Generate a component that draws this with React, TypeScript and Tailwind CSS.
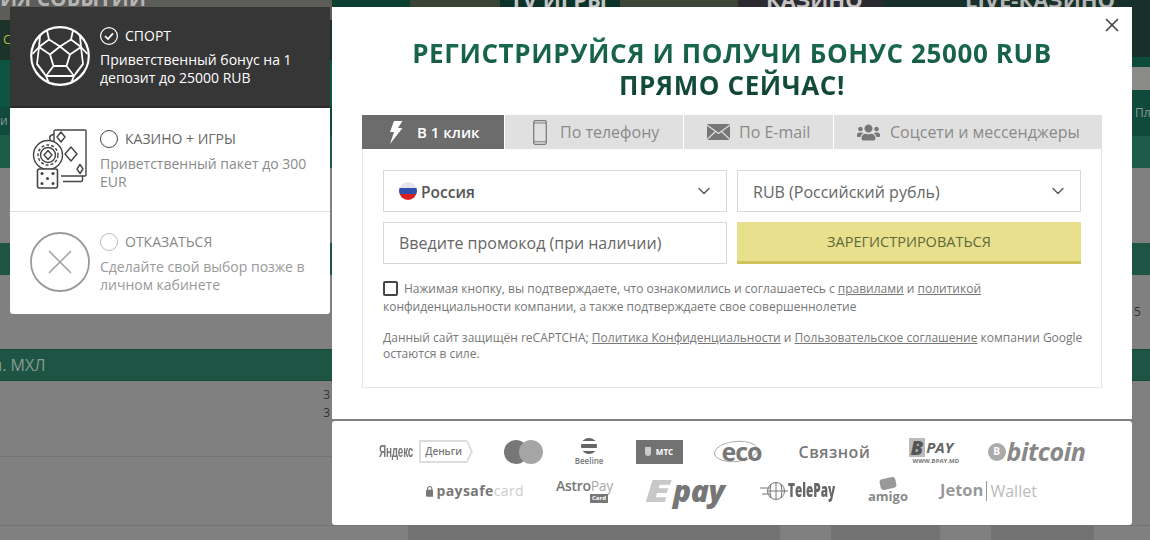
import { ChevronDown, X } from 'lucide-react';
import { FaUsers } from 'react-icons/fa';

const font = "font-['Open_Sans',sans-serif]";

function SoccerIcon() {
  return (
    <svg width="60" height="60" viewBox="0 0 60 60" fill="none" stroke="#fff" strokeWidth="1.8" strokeLinejoin="round" className="shrink-0">
      <circle cx="30" cy="30" r="28.8" strokeWidth="2.2" />
      <path d="M30 20.5L40 28.5L36.5 40H23.5L20 28.5Z" />
      <path d="M30 20.5L19 13.5L17 4.5M30 20.5L41 13.5L43 4.5M19 13.5L9 21L10 10M41 13.5L51 21L50 10" />
      <path d="M20 28.5L9 21L2.5 28M40 28.5L51 21L57.5 28M9 21L7 38L14 47M51 21L53 38L46 47" />
      <path d="M23.5 40L16 50L7 38M36.5 40L44 50L53 38M16 50L19 57M44 50L41 57M16 50H44" />
    </svg>
  );
}

function CasinoIcon() {
  return (
    <svg width="60" height="60" viewBox="0 0 60 60" fill="none" stroke="#444" strokeWidth="1.4" strokeLinejoin="round" className="shrink-0">
      <g transform="translate(3 0)">
        <path d="M21 13V2.5Q21 1 22.5 1H52Q53 1 53 2V46Q53 47 52 47H28" />
        <path d="M21 5L18 6.5Q16 7.5 17 10L18 14" />
        <path d="M30 52.5H48Q49.5 52.5 49.5 51V47" />
        <circle cx="15" cy="26" r="14.5" fill="#fff" />
        <circle cx="15" cy="26" r="10" strokeDasharray="3 2" />
        <circle cx="15" cy="26" r="7.5" />
        <path d="M15 21.5L19 26L15 30.5L11 26Z" />
        <path d="M38 18L44 25L38 32L32 25Z" />
        <path d="M28 3L32 8L28 13L24 8Z" />
        <path d="M47 35.5L50 40L47 44.5L44 40Z" />
        <rect x="4.5" y="40" width="20" height="19" rx="2" fill="#fff" strokeWidth="1.6" />
        <g fill="#444" stroke="none">
          <circle cx="9" cy="44.5" r="1.5" />
          <circle cx="20" cy="44.5" r="1.5" />
          <circle cx="14.5" cy="49.5" r="1.5" />
          <circle cx="9" cy="54.5" r="1.5" />
          <circle cx="20" cy="54.5" r="1.5" />
        </g>
      </g>
    </svg>
  );
}

function RefuseIcon() {
  return (
    <svg width="60" height="60" viewBox="0 0 60 60" fill="none" stroke="#9a9a9a" strokeWidth="1.8" className="shrink-0">
      <circle cx="30" cy="30" r="29" />
      <path d="M19 19L41 41M41 19L19 41" strokeWidth="1.4" />
    </svg>
  );
}

function CheckedRadio() {
  return (
    <svg width="18" height="18" viewBox="0 0 18 18" fill="none" stroke="#fff" className="shrink-0">
      <circle cx="9" cy="9" r="8.4" strokeWidth="1.2" />
      <path d="M5 9.2L8 12L13 6.4" strokeWidth="1.8" />
    </svg>
  );
}

function BoltIcon() {
  return (
    <svg width="14" height="23" viewBox="0 0 14 23" className="shrink-0">
      <path d="M5 0H13.5L9 7H13.5L1 23L5 11H1Z" fill="#fff" />
    </svg>
  );
}

function PhoneIcon() {
  return (
    <svg width="14" height="25" viewBox="0 0 14 25" fill="none" stroke="#7d7d7d" strokeWidth="1.3" className="shrink-0">
      <rect x="0.7" y="0.7" width="12.6" height="23.6" rx="1.5" />
      <path d="M1 3H13M1 21.8H13" strokeWidth="1" />
    </svg>
  );
}

function MailIcon() {
  return (
    <svg width="23" height="16" viewBox="0 0 23 16" className="shrink-0">
      <rect width="23" height="16" rx="1" fill="#777" />
      <path d="M0 1L11.5 9.5L23 1M0 15.5L8.5 7.5M23 15.5L14.5 7.5" fill="none" stroke="#e0e0e0" strokeWidth="1.2" />
    </svg>
  );
}

function SelectBox({ children }: { children: React.ReactNode }) {
  return (
    <div className="flex h-[42px] items-center justify-between border border-[#d8d8d8] bg-white pr-[12px]">
      {children}
      <ChevronDown size={20} strokeWidth={1.6} className="text-[#555]" />
    </div>
  );
}

function YandexLogo() {
  return (
    <div className="flex w-[94px] items-center gap-[6px]">
      <span className="w-[34px] origin-left scale-x-[0.62] whitespace-nowrap font-['Liberation_Sans',sans-serif] text-[16px] font-bold tracking-[-0.3px] text-[#777]">Яндекс</span>
      <div className="flex h-[23px] w-[49px] items-center justify-center border-2 border-r-0 border-[#ddd]">
        <span className="text-[10px] font-semibold text-[#777]">Деньги</span>
      </div>
      <svg width="6" height="23" viewBox="0 0 6 23" className="-ml-[6px]" fill="none" stroke="#ddd" strokeWidth="2"><path d="M0 1L5 11.5L0 22" /></svg>
    </div>
  );
}

function MasterLogo() {
  return (
    <div className="flex w-[39px] items-center">
      <div className="h-6 w-6 rounded-full bg-[#777]" />
      <div className="-ml-[9px] h-6 w-6 rounded-full bg-[#a5a5a5]" />
    </div>
  );
}

function BeelineLogo() {
  return (
    <div className="flex w-[31px] flex-col items-center">
      <div className="flex h-[16px] w-[16px] flex-col justify-between overflow-hidden rounded-full bg-white">
        <div className="h-[3px] bg-[#666]" />
        <div className="h-[4px] bg-[#666]" />
        <div className="h-[3px] bg-[#666]" />
      </div>
      <span className="mt-[3px] text-[8px] font-semibold leading-none text-[#777]">Beeline</span>
    </div>
  );
}

function MtsLogo() {
  return (
    <div className="flex h-6 w-[47px] items-center justify-center gap-[5px] bg-[#727272]">
      <div className="h-[9px] w-[6px] rounded-b-full bg-[#ccc]" />
      <span className="text-[8px] font-bold leading-none text-white">МТС</span>
    </div>
  );
}

function EcoLogo() {
  return (
    <div className="relative flex h-6 w-[48px] items-center justify-end">
      <div className="absolute left-0 top-[1px] h-[21px] w-[44px] -rotate-6 rounded-[50%] border border-[#aaa]" />
      <span className="relative text-[25px] font-bold leading-none tracking-[-1px] text-[#777]">eco</span>
    </div>
  );
}

function SvyaznoyLogo() {
  return <span className="ml-[6px] w-[71px] whitespace-nowrap text-[16px] font-semibold leading-none tracking-[0.5px] text-[#777]">Связной</span>;
}

function BpayLogo() {
  return (
    <div className="ml-[8px] flex h-[27px] w-[48px] flex-col">
      <div className="flex items-center leading-none">
        <span className="bg-[#bbb] px-[2px] text-[20px] font-extrabold italic leading-[19px] text-[#555]">B</span>
        <span className="ml-[1px] text-[15px] font-bold italic text-[#666]">PAY</span>
      </div>
      <span className="pl-[4px] text-[6px] font-bold leading-[8px] text-[#777]">WWW.BPAY.MD</span>
    </div>
  );
}

function BitcoinLogo() {
  return (
    <div className="flex w-[98px] items-center gap-[1px]">
      <div className="flex h-[18px] w-[18px] shrink-0 items-center justify-center rounded-full bg-[#aaa] text-[10px] font-bold text-white">B</div>
      <span className="text-[25px] font-bold italic leading-none tracking-[-0.4px] text-[#888]">bitcoin</span>
    </div>
  );
}

function PaysafeLogo() {
  return (
    <div className="flex w-[98px] items-center gap-[3px] text-[#777]">
      <svg width="9" height="14" viewBox="0 0 9 14"><path d="M2 6V4a2.5 2.5 0 015 0v2" fill="none" stroke="#777" strokeWidth="1.4" /><rect y="5.5" width="9" height="8.5" rx="1.5" fill="#777" /></svg>
      <span className="whitespace-nowrap text-[14px] font-bold leading-none tracking-[0.4px]">paysafe<span className="font-normal text-[#ccc]">card</span></span>
    </div>
  );
}

function AstroLogo() {
  return (
    <div className="flex h-[27px] w-[57px] flex-col items-start">
      <span className="whitespace-nowrap text-[14px] font-semibold leading-[18px] tracking-[-0.3px] text-[#777]">Astro<span className="font-normal text-[#aaa]">Pay</span></span>
      <span className="-mt-[1px] ml-[34px] bg-[#777] px-[2px] text-[6px] font-bold leading-[9px] text-white">Card</span>
    </div>
  );
}

function EpayLogo() {
  return (
    <div className="flex w-[83px] items-center">
      <span className="w-[28px] origin-left scale-x-150 text-[30px] font-extrabold italic leading-none text-[#c8c8c8]">E</span>
      <span className="text-[30px] font-extrabold italic leading-none tracking-[-0.5px] text-[#777]">pay</span>
    </div>
  );
}

function TelepayLogo() {
  return (
    <div className="flex w-[76px] items-center">
      <svg width="28" height="20" viewBox="0 0 28 20" fill="none" stroke="#777" strokeWidth="1" className="shrink-0">
        <circle cx="16" cy="10" r="8.5" />
        <path d="M7.5 10H28M0 7H10M2 13H10M16 1.5V18.5M11 3Q9 10 11 17M21 3Q23 10 21 17" />
      </svg>
      <span className="origin-left scale-x-[0.62] whitespace-nowrap text-[19px] font-extrabold leading-none text-[#666]">TelePay</span>
    </div>
  );
}

function AmigoLogo() {
  return (
    <div className="flex w-[40px] flex-col items-center">
      <div className="mb-[1px] h-[11px] w-[16px] -rotate-12 rounded-[3px] bg-[#999]" />
      <span className="text-[13px] font-bold leading-[13px] text-[#888]">amigo</span>
    </div>
  );
}

function JetonLogo() {
  return (
    <div className="flex w-[98px] items-center whitespace-nowrap">
      <span className="text-[16.5px] font-bold leading-none text-[#999]">Jeton</span>
      <div className="mx-[3px] h-[20px] w-px bg-[#999]" />
      <span className="text-[16px] leading-none text-[#bbb]">Wallet</span>
    </div>
  );
}

function BonusPanel() {
  return (
    <div className="absolute left-[10px] top-[7px] flex w-[320px] flex-col overflow-hidden rounded-b-[3px] bg-white text-[14px] leading-[18px]">
      <div className="flex h-[101px] gap-[10px] border-b-2 border-[#2a2a2a] bg-[#363636] pl-5 pt-[19px] text-white">
        <SoccerIcon />
        <div>
          <div className="flex h-[20px] items-center gap-[7px] uppercase">
            <CheckedRadio />
            <span>Спорт</span>
          </div>
          <p className="mt-[5px] w-[205px]">Приветственный бонус на 1 депозит до 25000 RUB</p>
        </div>
      </div>
      <div className="flex h-[104px] gap-[10px] border-b border-[#e0e0e0] pl-5 pt-[21px] text-[#8a8a8a]">
        <CasinoIcon />
        <div>
          <div className="flex h-[20px] items-center gap-[7px] uppercase text-[#666]">
            <div className="h-[18px] w-[18px] shrink-0 rounded-full border border-[#444]" />
            <span>Казино + игры</span>
          </div>
          <p className="mt-[6px] w-[210px]">Приветственный пакет до 300 EUR</p>
        </div>
      </div>
      <div className="flex h-[102px] gap-[10px] pl-5 pt-[20px] text-[#999]">
        <RefuseIcon />
        <div>
          <div className="flex h-[20px] items-center gap-[7px] uppercase text-[#888]">
            <div className="h-[18px] w-[18px] shrink-0 rounded-full border border-[#bbb]" />
            <span>Отказаться</span>
          </div>
          <p className="mt-[6px] w-[210px]">Сделайте свой выбор позже в личном кабинете</p>
        </div>
      </div>
    </div>
  );
}

function RegisterModal() {
  return (
    <div className="absolute left-[332px] top-[7px] w-[800px]">
      <div className="relative h-[412px] bg-white px-[30px] pt-[30px]">
        <X size={22} strokeWidth={1.8} className="absolute right-[9px] top-[7px] text-[#444]" />
        <h1 className="bg-gradient-to-b from-[#1a6f54] to-[#0f3f32] bg-clip-text text-center text-[26px] font-bold uppercase leading-[32px] tracking-[0.6px] text-transparent">
          Регистрируйся и получи бонус 25000 RUB
          <br />
          прямо сейчас!
        </h1>

        <div className="mt-[14px] flex h-[34px] gap-px text-[16px]">
          <div className="flex w-[142px] items-center bg-[#6c6c6c] pl-[27px] text-[15px] font-semibold text-white">
            <BoltIcon />
            <span className="ml-[14px]">В 1 клик</span>
          </div>
          <div className="flex w-[178px] items-center bg-[#e0e0e0] pl-[28px] text-[#8a8a8a]">
            <PhoneIcon />
            <span className="ml-[13px]">По телефону</span>
          </div>
          <div className="flex w-[149px] items-center bg-[#e0e0e0] pl-[23px] text-[#8a8a8a]">
            <MailIcon />
            <span className="ml-[9px]">По E-mail</span>
          </div>
          <div className="flex w-[268px] items-center bg-[#e0e0e0] pl-[23px] text-[#8a8a8a]">
            <FaUsers size={23} className="text-[#777]" />
            <span className="ml-[10px]">Соцсети и мессенджеры</span>
          </div>
        </div>

        <div className="h-[239px] border border-t-0 border-[#e6e6e6] px-5 pt-[21px]">
          <div className="grid grid-cols-2 gap-x-[10px] gap-y-[10px]">
            <SelectBox>
              <div className="flex items-center pl-[15px] text-[15.5px] font-semibold text-[#555]">
                <div className="flex h-[18px] w-[18px] flex-col overflow-hidden rounded-full">
                  <div className="h-1/3 bg-[#e4e4ee]" />
                  <div className="h-1/3 bg-[#2f4fa8]" />
                  <div className="h-1/3 bg-[#d8201f]" />
                </div>
                <span className="ml-[4px] pt-[3px]">Россия</span>
              </div>
            </SelectBox>
            <SelectBox>
              <span className="pl-[15px] pt-[1px] text-[16px] text-[#666]">RUB (Российский рубль)</span>
            </SelectBox>
            <div className="flex h-[42px] items-center border border-[#d8d8d8] pl-[15px] text-[16px] text-[#666]">
              Введите промокод (при наличии)
            </div>
            <div className="flex h-[42px] items-center justify-center border-b-[3px] border-[#cfc25f] bg-[#e8e08d] text-[14.5px] uppercase text-[#5d6a3a]">
              Зарегистрироваться
            </div>
          </div>

          <div className="mt-[16px] whitespace-nowrap text-[12px] leading-[18px] text-[#777]">
            <p>
              <span className="mr-[6px] inline-block h-[15px] w-[15px] rounded-[2px] border-2 border-[#444] align-[-3px]" />
              Нажимая кнопку, вы подтверждаете, что ознакомились и соглашаетесь с <u>правилами</u> и <u>политикой</u>
              <br />
              конфиденциальности компании, а также подтверждаете свое совершеннолетие
            </p>
            <p className="mt-[14px] leading-[16px]">
              Данный сайт защищён reCAPTCHA; <u>Политика Конфиденциальности</u> и <u>Пользовательское соглашение</u> компании Google
              <br />
              остаются в силе.
            </p>
          </div>
        </div>
      </div>

      <div className="mt-[2px] flex h-[104px] flex-col items-center gap-[10px] rounded-[3px] bg-white pt-[16px]">
        <div className="flex h-[29px] items-center gap-[31px]">
          <YandexLogo />
          <MasterLogo />
          <BeelineLogo />
          <MtsLogo />
          <EcoLogo />
          <SvyaznoyLogo />
          <BpayLogo />
          <BitcoinLogo />
        </div>
        <div className="flex h-[29px] items-center gap-[32px]">
          <PaysafeLogo />
          <AstroLogo />
          <EpayLogo />
          <TelepayLogo />
          <AmigoLogo />
          <JetonLogo />
        </div>
      </div>
    </div>
  );
}

function PageBehind() {
  return (
    <div className="flex h-full flex-col bg-[#808080]">
      <div className="flex h-[168px] text-[#8a9a94]">
        <div className="flex w-[332px] flex-col">
          <div className="h-[20px] overflow-hidden bg-[#5c5c58]">
            <div className="-mt-[14px] whitespace-nowrap text-[21px] font-bold leading-[24px] text-[#b5b5b5]">ИЯ СОБЫТИЙ</div>
          </div>
          <div className="flex h-[40px] items-center bg-[#1b3328] pl-[3px] text-[13px] text-[#b8b84a]">С</div>
          <div className="h-[47px] bg-[#0e5442]" />
          <div className="flex h-[28px] items-center bg-[#0f4a3a] text-[12px]">и</div>
          <div className="h-[33px] bg-[#1e5c4a]" />
        </div>
        <div className="flex grow flex-col">
          <div className="flex h-[57px] bg-[#0b3329]">
            <div className="w-[78px] bg-[#0b4030]" />
            <div className="w-[90px] bg-[#3a4436]" />
            <div className="w-[120px] overflow-hidden">
              <div className="-mt-[13px] whitespace-nowrap pl-[10px] text-[22px] font-bold leading-[24px] text-[#c5c5c5]">TV ИГРЫ</div>
            </div>
            <div className="w-[118px] bg-[#3d4636]" />
            <div className="w-[145px] overflow-hidden bg-[#2a2a30]">
              <div className="-mt-[13px] whitespace-nowrap pl-[28px] text-[22px] font-bold leading-[24px] text-[#c5c5c5]">КАЗИНО</div>
            </div>
            <div className="grow overflow-hidden bg-[#17302a]">
              <div className="-mt-[13px] whitespace-nowrap pl-[82px] text-[22px] font-bold leading-[24px] text-[#b5b5b5]">LIVE-КАЗИНО</div>
            </div>
          </div>
          <div className="h-[10px] bg-[#0e4a3a]" />
          <div className="h-[23px] bg-[#8a8a88]" />
          <div className="flex h-[46px] items-center justify-end bg-[#0f4a3a] text-[12px]">
            <span className="w-[15px] overflow-hidden">Пл</span>
          </div>
          <div className="h-[32px] bg-[#1e5c4a]" />
        </div>
      </div>
      <div className="h-[75px]" />
      <div className="h-[32px] bg-[#1d5443]" />
      <div className="flex h-[74px] items-center justify-end text-[12px] text-[#333]">
        <span className="w-[16px]">5</span>
      </div>
      <div className="flex h-[32px] items-center border-y border-[#174a3b] bg-[#1d5443] text-[16px] text-[#8a9a94]">
        <span className="-ml-[7px]">л. МХЛ</span>
      </div>
      <div className="h-[76px] w-[332px] border-b border-[#737373] pt-[5px] text-right text-[12px] leading-[18px] text-[#333]">
        <div className="pr-[2px]">3</div>
        <div className="pr-[2px]">3</div>
      </div>
      <div className="h-[69px] border-b border-[#737373]" />
      <div className="flex grow">
        <div className="w-[408px]" />
        <div className="w-[372px] bg-[#727272]" />
        <div className="w-[51px]" />
        <div className="w-[109px] bg-[#727272]" />
        <div className="w-[51px]" />
        <div className="w-[103px] bg-[#727272]" />
      </div>
    </div>
  );
}

export default function App() {
  return (
    <div className={`relative h-[540px] w-[1150px] overflow-hidden ${font}`}>
      <PageBehind />
      <BonusPanel />
      <RegisterModal />
    </div>
  );
}
